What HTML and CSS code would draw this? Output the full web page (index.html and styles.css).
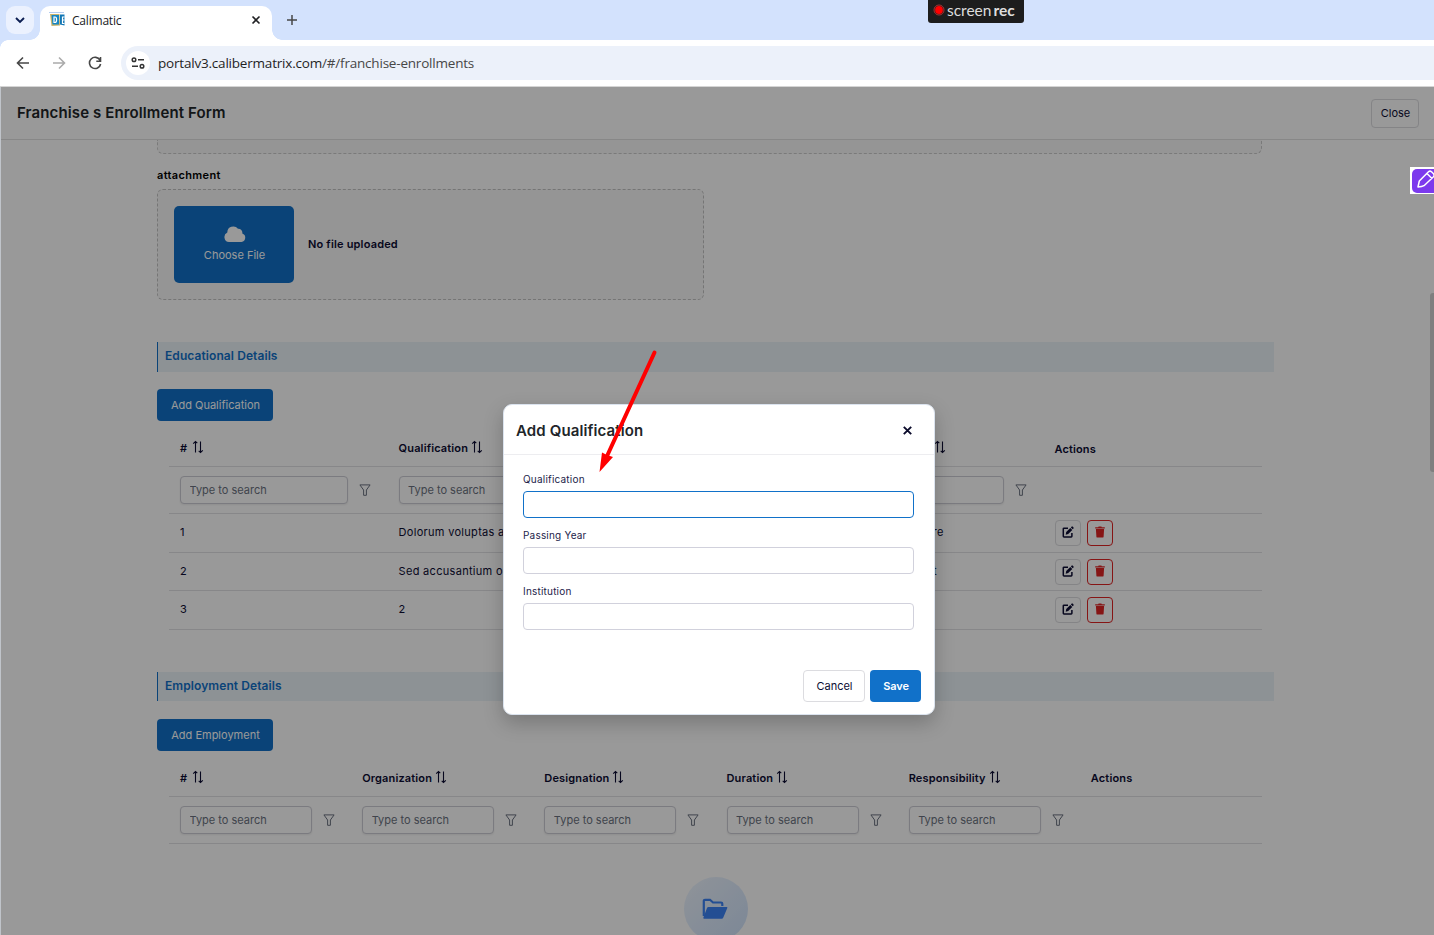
FILE: index.html
```
<!DOCTYPE html>
<html lang="en">
<head>
    <meta charset="utf-8">
    <title>Calimatic</title>
    <meta name="viewport" content="width=device-width, initial-scale=1">
    <link rel="stylesheet" href="styles.css">
</head>
<body>
    <!-- icon sprites -->
    <svg class="sprites" width="0" height="0">
        <symbol id="i-sort" viewBox="0 0 12 14"><path d="M3.5 12.5V1.8M1.2 3.700L3.500 1.500 5.300 3.200M8.500 1.500v10.700M6.700 10.800l1.800 1.700 2.300-2.200" fill="none" stroke="currentColor" stroke-width="1.100"/></symbol>
        <symbol id="i-filter" viewBox="0 0 12 12"><path d="M.9.9h10.2L7.4 6v5.3H4.6V6z" fill="none" stroke="currentColor" stroke-width="1" stroke-linejoin="round"/></symbol>
        <symbol id="i-edit" viewBox="0 0 12 12"><path d="M6 2.200H2q-.7 0-.7.7v7.400q0 .7.700.7h7.200q.7 0 .7-.7V7" fill="none" stroke="currentColor" stroke-width="1.500"/><path d="M3.700 8.700l.5-2.700L8.300 1.900l2 2L6.200 8.100zM8.900 1.400l.8-.8q.5-.4 1 0l.8.8q.4.5 0 1l-.8.8z" fill="currentColor"/></symbol>
        <symbol id="i-trash" viewBox="0 0 10 12"><path d="M.2 1.2h3L3.6.4h2.8l.4.8h3v1.2H.2zM.9 3h8.2l-.5 7.700q-.1.900-1 .900H2.400q-.9 0-1-.9z" fill="currentColor"/></symbol>
    </svg>

    <div class="browser">
        <div class="tabstrip">
            <div class="tab-search"><svg width="10" height="7" viewBox="0 0 10 7"><path d="M1 1l4 4 4-4" fill="none" stroke="#0b1d51" stroke-width="1.9"/></svg></div>
            <div class="tab">
                <svg class="favicon" width="16" height="16" viewBox="0 0 16 16">
                    <path d="M0 .5h15" stroke="#b4cdf0"/><path d="M1 2l9.500 0 .5 11.500-8.500.5z" fill="#c9b36b"/><path d="M2.500 3h7.500v9.500H3.500z" fill="#1586c4"/><path d="M11 2.500h4.500v11l-4.500-1z" fill="#1277b4"/><path d="M5 5h1q1.600 0 1.600 2.700T6 10.500H5zM15.500 5h-2v6.500h2M13.500 8h2" fill="none" stroke="#fff" stroke-width="1.200"/>
                </svg>
                <span class="tab-title">Calimatic</span>
                <svg class="tab-close" width="10" height="10" viewBox="0 0 10 10"><path d="M1.500 1.500l7 7M8.500 1.500l-7 7" stroke="#202124" stroke-width="1.600"/></svg>
            </div>
            <svg class="new-tab" width="12" height="12" viewBox="0 0 12 12"><path d="M6 1v10M1 6h10" stroke="#474747" stroke-width="1.500"/></svg>
        </div>
        <div class="toolbar">
            <svg width="14" height="14" viewBox="0 0 14 14"><path d="M13 7H2M7 1.500L1.500 7 7 12.500" fill="none" stroke="#474747" stroke-width="1.600"/></svg>
            <svg width="14" height="14" viewBox="0 0 14 14"><path d="M1 7h11M7 1.500L12.500 7 7 12.500" fill="none" stroke="#ababab" stroke-width="1.600"/></svg>
            <svg width="14" height="14" viewBox="0 0 14 14"><path d="M12 4.200A5.600 5.600 0 1 0 12.600 8M12.500 1v4.200H8.300" fill="none" stroke="#474747" stroke-width="1.600"/></svg>
            <div class="omnibox">
                <div class="site-info"><svg width="14" height="12" viewBox="0 0 14 12"><g fill="none" stroke="#333" stroke-width="1.500"><circle cx="3" cy="2.700" r="1.800"/><path d="M7 2.700h6M1 9.300h6"/><circle cx="11" cy="9.300" r="1.800"/></g></svg></div>
                <span class="url">portalv3.calibermatrix.com<i>/#/franchise-enrollments</i></span>
            </div>
        </div>
        <div class="screenrec"><svg width="12" height="12" viewBox="0 0 12 12"><circle cx="6" cy="6" r="5" fill="none" stroke="#a33" /><circle cx="6" cy="6" r="3.900" fill="#f00"/></svg><span>screen<b>rec</b></span></div>
    </div>

    <div class="page">
        <div class="page-header">
            <h1>Franchise s Enrollment Form</h1>
            <button class="btn btn-close">Close</button>
        </div>

        <div class="content">
            <div class="drop-tail"></div>
            <label class="field-label">attachment</label>
            <div class="upload">
                <button class="choose">
                    <svg width="22" height="16" viewBox="0 0 22 16"><path d="M5 16a5 5 0 0 1-1.700-9.500A6 6 0 0 1 14 2.800a4 4 0 0 1 4.300 4.700A4.400 4.400 0 0 1 17.500 16z" fill="#fff"/></svg>
                    <span>Choose File</span>
                </button>
                <b>No file uploaded</b>
            </div>

            <h2 class="section">Educational Details</h2>
            <button class="btn-primary add">Add Qualification</button>
            <div class="grid edu">
                <div class="row head">
                    <div><span class="hash">#</span><svg class="sort"><use href="#i-sort"/></svg></div>
                    <div>Qualification<svg class="sort"><use href="#i-sort"/></svg></div>
                    <div>Passing Year<svg class="sort"><use href="#i-sort"/></svg></div>
                    <div><span class="inst-head">Institution Name</span><svg class="sort"><use href="#i-sort"/></svg></div>
                    <div class="low">Actions</div>
                </div>
                <div class="row filters">
                    <div><input placeholder="Type to search"><svg class="filter"><use href="#i-filter"/></svg></div>
                    <div><input placeholder="Type to search"><svg class="filter"><use href="#i-filter"/></svg></div>
                    <div><input placeholder="Type to search"><svg class="filter"><use href="#i-filter"/></svg></div>
                    <div><input placeholder="Type to search"><svg class="filter"><use href="#i-filter"/></svg></div>
                    <div></div>
                </div>
                <div class="row data">
                    <div>1</div><div>Dolorum voluptas a</div><div>2001</div><div><span class="inst">Ut labore dolore</span></div>
                    <div class="actions"><button class="icon-btn"><svg><use href="#i-edit"/></svg></button><button class="icon-btn del"><svg><use href="#i-trash"/></svg></button></div>
                </div>
                <div class="row data short">
                    <div>2</div><div>Sed accusantium o</div><div>1998</div><div><span class="inst second">Quia sit incidunt</span></div>
                    <div class="actions"><button class="icon-btn"><svg><use href="#i-edit"/></svg></button><button class="icon-btn del"><svg><use href="#i-trash"/></svg></button></div>
                </div>
                <div class="row data">
                    <div>3</div><div>2</div><div>2</div><div>2</div>
                    <div class="actions"><button class="icon-btn"><svg><use href="#i-edit"/></svg></button><button class="icon-btn del"><svg><use href="#i-trash"/></svg></button></div>
                </div>
            </div>

            <h2 class="section second">Employment Details</h2>
            <button class="btn-primary add">Add Employment</button>
            <div class="grid emp">
                <div class="row head">
                    <div><span class="hash">#</span><svg class="sort"><use href="#i-sort"/></svg></div>
                    <div>Organization<svg class="sort"><use href="#i-sort"/></svg></div>
                    <div>Designation<svg class="sort"><use href="#i-sort"/></svg></div>
                    <div>Duration<svg class="sort"><use href="#i-sort"/></svg></div>
                    <div>Responsibility<svg class="sort"><use href="#i-sort"/></svg></div>
                    <div>Actions</div>
                </div>
                <div class="row filters">
                    <div><input placeholder="Type to search"><svg class="filter"><use href="#i-filter"/></svg></div>
                    <div><input placeholder="Type to search"><svg class="filter"><use href="#i-filter"/></svg></div>
                    <div><input placeholder="Type to search"><svg class="filter"><use href="#i-filter"/></svg></div>
                    <div><input placeholder="Type to search"><svg class="filter"><use href="#i-filter"/></svg></div>
                    <div><input placeholder="Type to search"><svg class="filter"><use href="#i-filter"/></svg></div>
                    <div></div>
                </div>
            </div>
            <div class="empty"><svg width="26" height="22" viewBox="0 0 26 22"><path d="M1.800 18V3q0-1.200 1.200-1.200h5L11 4.500h8q1.300 0 1.300 1.300V8" fill="none" stroke="#3b82f6" stroke-width="2.200"/><path d="M6.500 9h18.200q1 0 .6 1l-4 9.500q-.5 1.200-1.600 1.200H2.200q-1.200 0-.8-1.200L5 10q.4-1 1.500-1z" fill="#3b82f6"/></svg></div>
        </div>

        <div class="scrollbar"></div>
        <div class="overlay"></div>

        <div class="modal">
            <div class="modal-head">
                <h3>Add Qualification</h3>
                <svg width="9" height="9" viewBox="0 0 9 9"><path d="M.8.8l7.400 7.400M8.200.8L.8 8.200" stroke="#0b0b2b" stroke-width="1.900"/></svg>
            </div>
            <div class="modal-body">
                <label>Qualification</label>
                <input class="focused" type="text">
                <label>Passing Year</label>
                <input type="text">
                <label>Institution</label>
                <input type="text">
            </div>
            <div class="modal-foot">
                <button class="btn">Cancel</button>
                <button class="btn-primary save">Save</button>
            </div>
        </div>
    </div>

    <div class="pen"><svg width="24" height="24" viewBox="0 0 24 24"><rect width="28" height="24" rx="5" fill="#7c3aed"/><path d="M6 18l1.300-6L16.500 2.800q1.500-1.300 3 0l2 2q1.300 1.500 0 3L12 16.700q-2 1-6 1.300zM15 4.500l5 5" fill="none" stroke="#fff" stroke-width="1.500" stroke-linejoin="round"/></svg></div>
    <svg class="arrow" width="62" height="126" viewBox="0 0 62 126"><path d="M56.500 3.500L9.500 106" stroke="#f00" stroke-width="4" stroke-linecap="round"/><path d="M1.500 123L4 103.500l5 2.500 6 2z" fill="#f00"/></svg>
</body>
</html>
```
FILE: styles.css
```
* { box-sizing: border-box; }
body { margin: 0; width: 1434px; height: 935px; overflow: hidden; position: relative; font-family: Inter, "Open Sans", sans-serif; font-size: 11px; color: #0d0d33; background: white; }
button, input { font-family: inherit; font-size: 11px; color: inherit; }
h1, h2, h3 { margin: 0; font-weight: 600; }
svg { display: block; flex: none; }
.sprites { position: absolute; }

/* Browser bar */
.browser { height: 87px; border-bottom: 1px solid #d5d5d5; font-family: "Open Sans", sans-serif; }
.tabstrip { height: 40px; background: #d3e2fd; display: flex; align-items: flex-start; padding-left: 6px; }
.tab-search { width: 28px; height: 28px; margin-top: 6px; border-radius: 9px; background: #ebf1fe; display: flex; align-items: center; justify-content: center; }
.tab { position: relative; width: 232px; height: 34px; margin: 6px 0 0 6px; background: white; border-radius: 10px 10px 0 0; display: flex; align-items: center; padding: 0 11px 6px 9px; }
.tab::before, .tab::after { content: ""; position: absolute; bottom: 0; width: 10px; height: 10px; }
.tab::before { left: -10px; background: radial-gradient(circle at 0 0, transparent 9.5px, white 10px); }
.tab::after { right: -10px; background: radial-gradient(circle at 100% 0, transparent 9.5px, white 10px); }
.tab-title { font-size: 12px; letter-spacing: -0.2px; color: #202124; margin-left: 7px; flex: 1; }
.new-tab { margin: 14px 0 0 14px; }
.toolbar { height: 46px; display: flex; align-items: center; gap: 22px; padding-left: 16px; background: radial-gradient(circle at 8px 8px, white 7.5px, #d3e2fd 8px) 0 0 / 8px 8px no-repeat; }
.omnibox { flex: 1; height: 34px; background: #ecf1fa; border-radius: 17px 0 0 17px; margin-left: -3px; display: flex; align-items: center; padding-left: 5px; }
.site-info { width: 24px; height: 24px; border-radius: 50%; background: white; display: flex; align-items: center; justify-content: center; }
.url { margin-left: 8px; font-size: 13.500px; letter-spacing: -0.2px; color: #1f1f1f; }
.url i { font-style: normal; color: #474747; }
.screenrec { position: absolute; left: 928px; top: 0; width: 96px; height: 23px; border-radius: 0 0 3px 3px; background: #1d1d1d; color: #ddd; display: flex; align-items: center; padding: 0 0 3px 5px; gap: 2px; font: 15.500px Lato, sans-serif; }
.screenrec b { margin-left: 2px; }

/* Page */
.page { position: relative; height: 848px; overflow: hidden; border-left: 1px solid #c0c4ca; }
.page-header { height: 53px; border-bottom: 1px solid #e2e2e2; display: flex; align-items: center; justify-content: space-between; padding: 0 15px 0 16px; }
.page-header h1 { font-size: 15px; letter-spacing: 0.12px; color: #212529; padding-bottom: 1px; }
.btn { background: white; border: 1px solid #dcdce0; border-radius: 4px; padding: 0 0 0 1px; }
.btn-close { width: 48px; height: 29px; }
.content { padding-left: 156px; }
.drop-tail { width: 1105px; height: 14px; border: 1px dashed #ccc; border-top: 0; border-radius: 0 0 6px 6px; background: #f8f8f8; }
.field-label { display: block; margin-top: 14px; height: 21px; line-height: 15px; font-weight: 600; letter-spacing: 0.35px; color: black; }
.upload { width: 547px; height: 111px; border: 1px dashed #c4c4c4; border-radius: 6px; background: #f8f8f8; display: flex; align-items: center; padding-left: 16px; gap: 14px; }
.upload b { font-weight: 600; letter-spacing: 0.18px; padding-bottom: 2px; }
.choose { width: 120px; height: 77px; border: 0; border-radius: 5px; background: #1171c9; color: white; display: flex; flex-direction: column; align-items: center; justify-content: center; gap: 6px; padding: 0 0 2px 1px; }
.section { width: 1117px; height: 30px; margin-top: 42px; border-left: 1px solid #1171c9; background: #ebf3f9; color: #1171c9; font-size: 12px; letter-spacing: 0.08px; line-height: 28px; padding-left: 7px; }
.section.second { height: 29px; }
.btn-primary { background: #1171c9; color: white; border: 0; border-radius: 4px; padding: 0 0 0 1px; }
.add { display: block; width: 116px; height: 32px; margin-top: 17px; }
.second + .add { margin-top: 18px; }

/* Tables */
.grid { width: 1093px; margin-left: 12px; }
.row { display: grid; height: 39px; border-bottom: 1px solid #e2e2e5; }
.edu .row { grid-template-columns: repeat(5, 1fr); }
.emp .row { grid-template-columns: repeat(6, 1fr); }
.row > div { display: flex; align-items: center; padding-left: 11px; white-space: nowrap; }
.row.data > div { padding-bottom: 2px; letter-spacing: 0.3px; }
.row.short { height: 38px; }
.row.head { height: 46px; font-weight: 600; padding-top: 8px; }
.row.head > div { letter-spacing: 0.15px; }
.row.filters { height: 47px; }
.hash { width: 9px; }
.sort { width: 12px; height: 14px; margin: -2px 0 0 3px; }
.low { padding-top: 2px; }
.grid input { width: 168px; height: 28px; border: 1px solid #cdcdd5; border-radius: 4px; padding: 0 8.500px; box-shadow: 0 1px 2px rgba(0,0,0,0.07); }
.emp input { width: 132px; }
.grid input::placeholder { color: #6b7280; }
.filter { width: 12px; height: 12px; margin-left: 11px; color: #6b7280; }
.inst-head { width: 95px; }
.inst { width: 108px; text-align: right; }
.inst.second { width: 101px; }
.row.data > .actions { padding: 0 0 0 12px; }
.icon-btn { width: 26px; height: 26px; padding: 0 0 2px; margin-right: 6px; border: 1px solid #dcdce0; border-radius: 4px; background: white; display: flex; align-items: center; justify-content: center; }
.icon-btn svg { width: 12px; height: 12px; }
.del { border-color: #e02424; color: #e02424; }
.empty { width: 64px; height: 64px; margin: 33px 0 0 527px; border-radius: 50%; background: linear-gradient(135deg, #eff6ff, #cfe2fb); display: flex; align-items: center; justify-content: center; padding-right: 2px; }
.scrollbar { position: absolute; right: 0; top: 206px; width: 4px; height: 179px; border-radius: 3px 0 0 3px; background: #d4d4d4; }
.overlay { position: absolute; inset: 0 0 0 -1px; background: rgba(0,0,0,0.4); }

/* Modal */
.modal { position: absolute; left: 502px; top: 317px; width: 432px; height: 311px; background: white; border: 1px solid #dbe3ee; border-radius: 9px; box-shadow: 0 8px 20px rgba(0,0,0,0.22); }
.modal-head { height: 50px; border-bottom: 1px solid #ededf0; display: flex; align-items: center; justify-content: space-between; padding: 1px 22px 0 12px; }
.modal-head h3 { font-size: 15px; letter-spacing: 0.12px; color: #212529; }
.modal-body { padding: 17px 20px 0 19px; }
.modal-body label { display: block; height: 19px; line-height: 15px; font-size: 10px; letter-spacing: 0.2px; color: #23234a; }
.modal-body input { display: block; width: 391px; height: 27px; margin-bottom: 10px; border: 1px solid #d1d1dc; border-radius: 4px; background: white; }
.modal-body .focused { border-color: #1171c9; }
.modal-foot { display: flex; justify-content: flex-end; gap: 5px; padding: 30px 13px 0 0; }
.modal-foot .btn { width: 62px; height: 32px; }
.modal-foot .save { width: 51px; height: 32px; font-weight: 600; letter-spacing: -0.1px; }

.pen { position: absolute; left: 1410px; top: 167px; width: 24px; height: 27px; background: white; padding: 2px 0 0 2px; overflow: hidden; }
.arrow { position: absolute; left: 598px; top: 349px; }
```
